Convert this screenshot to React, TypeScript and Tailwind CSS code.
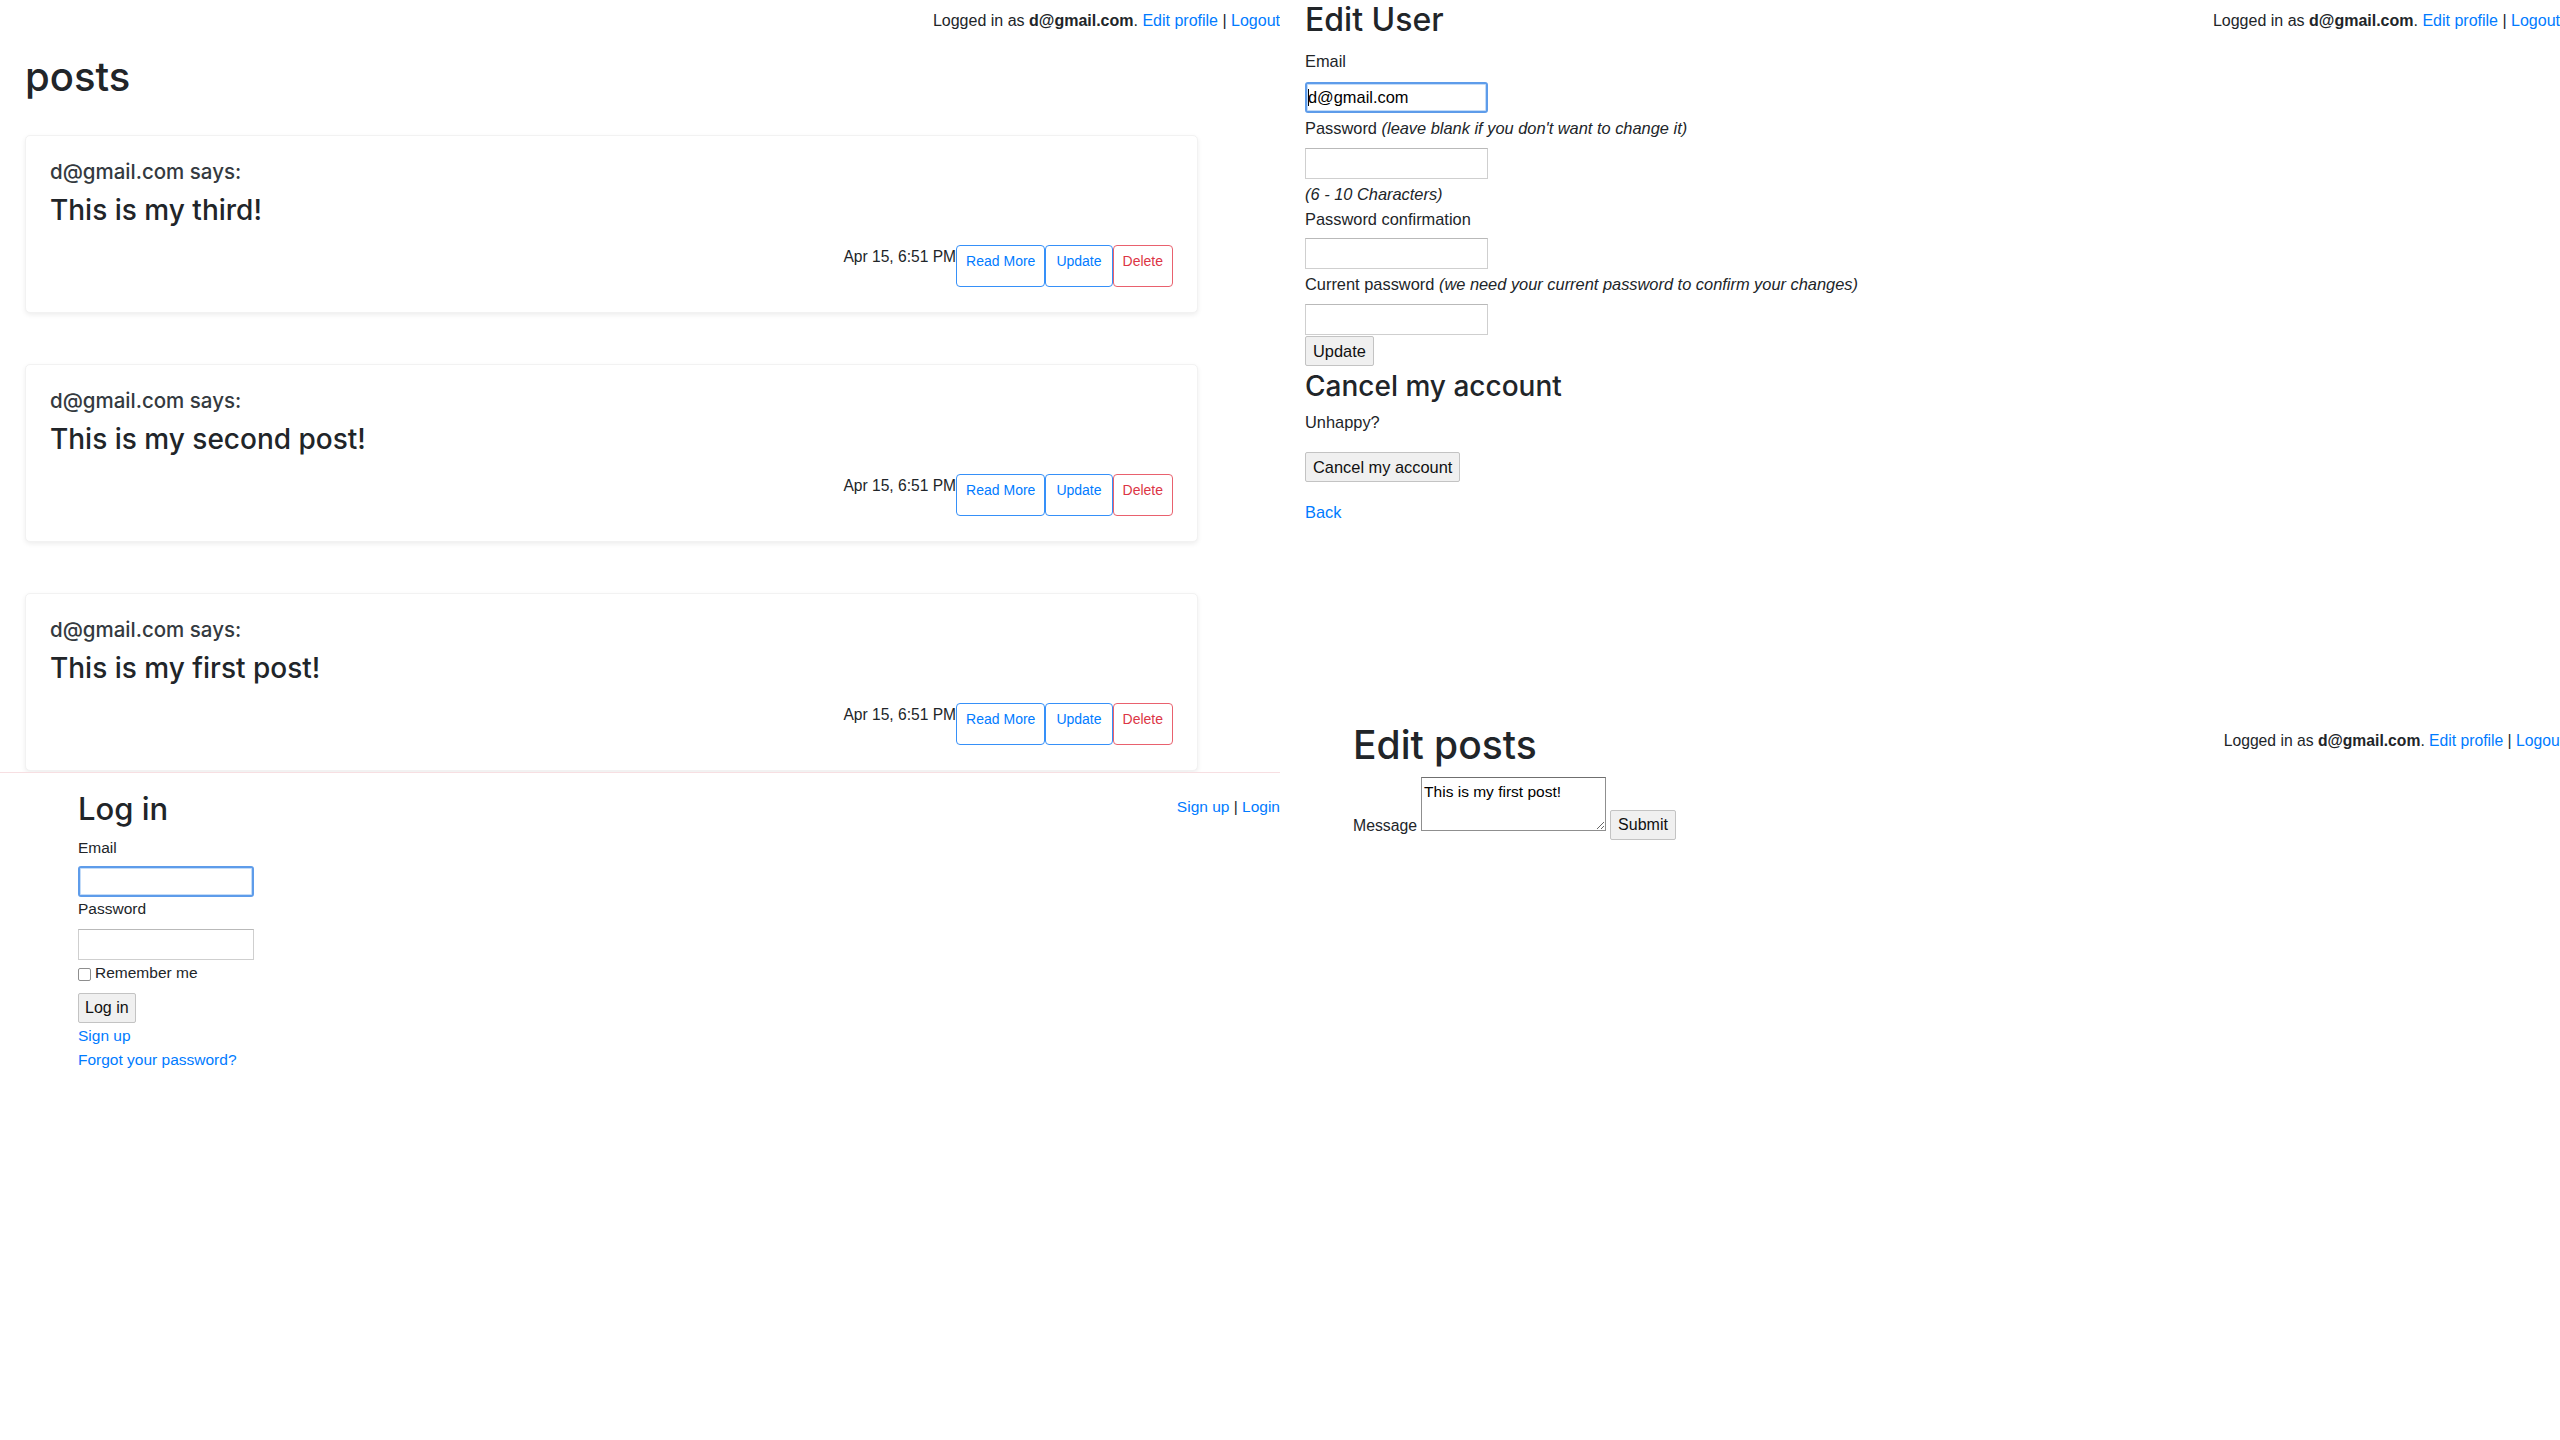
import React from 'react';

// Four screens captured side by side: posts index, edit user, log in, edit post.

const posts = [
  { id: 3, author: 'd@gmail.com', body: 'This is my third!', date: 'Apr 15, 6:51 PM' },
  { id: 2, author: 'd@gmail.com', body: 'This is my second post!', date: 'Apr 15, 6:51 PM' },
  { id: 1, author: 'd@gmail.com', body: 'This is my first post!', date: 'Apr 15, 6:51 PM' },
];

const sans = "font-['Liberation_Sans',Arial,sans-serif]";
const head = "font-['Inter','Liberation_Sans',sans-serif] font-medium";

function LoggedIn({ className = '' }: { className?: string }) {
  return (
    <div className={`${sans} leading-6 whitespace-nowrap ${className}`}>
      Logged in as <b>d@gmail.com</b>. <a className="text-[#007bff]">Edit profile</a> |{' '}
      <a className="text-[#007bff]">Logout</a>
    </div>
  );
}

function PostCard({ author, body, date }: { author: string; body: string; date: string }) {
  const btn = 'h-[42px] pt-[5px] pb-[14px] border rounded-[4px] text-[14px] leading-[21px]';
  return (
    <div className="w-[1173px] h-[178px] shrink-0 bg-white border border-[#f2f2f2] rounded-[5px] shadow-[0_2px_5px_rgba(0,0,0,0.07)] pt-[24px] px-[24px] pb-[25px]">
      <p className={`${head} text-[20.5px] leading-[24px] text-[#343a40]`}>{author} says:</p>
      <p className={`${head} text-[28px] leading-[35px] mt-[9px]`}>{body}</p>
      <div className={`${sans} flex justify-end items-start mt-[17px]`}>
        <span className="text-[15.6px] leading-[22px] mt-[1px]">{date}</span>
        <button className={`${btn} px-[9px] border-[#3690f8] text-[#007bff]`}>Read More</button>
        <button className={`${btn} px-[10px] border-[#3690f8] text-[#007bff]`}>Update</button>
        <button className={`${btn} px-[9px] border-[#e9616e] text-[#dc3545]`}>Delete</button>
      </div>
    </div>
  );
}

function GrayButton({ children, className = '' }: { children: React.ReactNode; className?: string }) {
  return (
    <button className={`h-[30px] bg-[#f0f0f0] border border-[#c3c3c3] rounded-[2px] text-[#111] ${className}`}>
      {children}
    </button>
  );
}

const field = 'block h-[31px] bg-white border border-[#cfcfcf] border-t-[#b9b9b9]';
const focused =
  'block h-[31px] bg-white border-2 border-[#5e9cea] rounded-[3px] shadow-[inset_0_0_0_1px_#c4dcf8] outline-none';

export default function App() {
  return (
    <div className="w-[2560px] h-[1440px] bg-white text-[#212529] flex overflow-hidden">
      {/* left column */}
      <div className="w-[1280px] flex flex-col">
        {/* posts index */}
        <section className="h-[772px] overflow-hidden">
          <div className="flex justify-end pt-[9px]">
            <LoggedIn className="text-[16px]" />
          </div>
          <h1 className={`${head} text-[40px] leading-[48px] mt-[20px] ml-[25px]`}>posts</h1>
          <div className="flex flex-col gap-[51px] mt-[34px] ml-[25px]">
            {posts.map((p) => (
              <PostCard key={p.id} {...p} />
            ))}
          </div>
        </section>

        {/* log in */}
        <section className={`${sans} flex-1 border-t border-[#f7dfe2] pt-[17px] text-[15.5px]`}>
          <div className="flex justify-between items-start pl-[78px]">
            <h2 className={`${head} text-[31px] leading-[38px]`}>Log in</h2>
            <div className="leading-[22px] mt-[6px]">
              <a className="text-[#007bff]">Sign up</a> | <a className="text-[#007bff]">Login</a>
            </div>
          </div>
          <form className="pl-[78px]">
            <label className="block leading-[20px] mt-[10px]">Email</label>
            <input className={`${focused} w-[176px] mt-[8px]`} />
            <label className="block leading-[20px] mt-[2px]">Password</label>
            <input type="password" className={`${field} w-[176px] h-[30px] mt-[10px]`} />
            <div className="flex items-start gap-[4px] mt-[5px]">
              <input
                type="checkbox"
                className="appearance-none w-[13px] h-[13px] mt-[3px] bg-white border border-[#8e8e8e] rounded-[2px]"
              />
              <span className="leading-[16px]">Remember me</span>
            </div>
            <GrayButton className="h-[29px] px-[6px] mt-[12px] text-[16px]">Log in</GrayButton>
            <a className="block text-[#007bff] leading-[24px] mt-[1px]">Sign up</a>
            <a className="block text-[#007bff] leading-[24px]">Forgot your password?</a>
          </form>
        </section>
      </div>

      {/* right column */}
      <div className="w-[1280px] flex flex-col overflow-hidden">
        {/* edit user */}
        <section className="h-[721px] shrink-0">
          <div className="flex justify-between items-start pl-[25px]">
            <h1 className={`${head} text-[32px] leading-[40px]`}>Edit User</h1>
            <LoggedIn className="text-[16px] mt-[9px]" />
          </div>
          <form className={`${sans} pl-[25px] text-[16.4px] leading-[24px]`}>
            <label className="block mt-[9px]">Email</label>
            <div className="relative w-[183px] mt-[9px]">
              <input
                readOnly
                value="d@gmail.com"
                className={`${focused} w-[183px] pl-[1px] text-[16.4px] text-black`}
              />
              <span className="absolute left-[3px] top-[7px] w-[1px] h-[17px] bg-black" />
            </div>
            <label className="block mt-[3px]">
              Password <i>(leave blank if you don't want to change it)</i>
            </label>
            <input type="password" className={`${field} w-[183px] mt-[8px]`} />
            <p className="mt-[3px]">
              <i>(6 - 10 Characters)</i>
            </p>
            <label className="block mt-[1px]">Password confirmation</label>
            <input type="password" className={`${field} w-[183px] mt-[7px]`} />
            <label className="block mt-[3px]">
              Current password <i>(we need your current password to confirm your changes)</i>
            </label>
            <input type="password" className={`${field} w-[183px] mt-[8px]`} />
            <GrayButton className="px-[7px] mt-[1px] text-[16.4px]">Update</GrayButton>

            <h2 className={`${head} text-[28px] leading-[34px] mt-[3px] text-[#212529]`}>Cancel my account</h2>
            <p className="mt-[7px]">Unhappy?</p>
            <GrayButton className="px-[7px] mt-[18px] text-[16.4px]">Cancel my account</GrayButton>
            <a className="block text-[#007bff] mt-[18px]">Back</a>
          </form>
        </section>

        {/* edit post */}
        <section>
          <div className="flex justify-between items-start pl-[73px] mr-[-4px]">
            <h1 className={`${head} text-[39px] leading-[47px]`}>Edit posts</h1>
            <LoggedIn className="text-[15.7px] mt-[8px]" />
          </div>
          <form className={`${sans} flex items-end pl-[73px] mt-[9px] text-[15.8px]`}>
            <label className="leading-[20px] mb-[-5px] mr-[4px]">Message</label>
            <textarea
              readOnly
              defaultValue="This is my first post!"
              className="w-[185px] h-[54px] border border-[#8f8f8f] border-t-[#6f6f6f] px-[2px] pt-[5px] text-[15.5px] leading-[18px] text-black"
            />
            <GrayButton className="px-[7px] ml-[4px] mb-[-9px] text-[16px]">Submit</GrayButton>
          </form>
        </section>
      </div>
    </div>
  );
}
